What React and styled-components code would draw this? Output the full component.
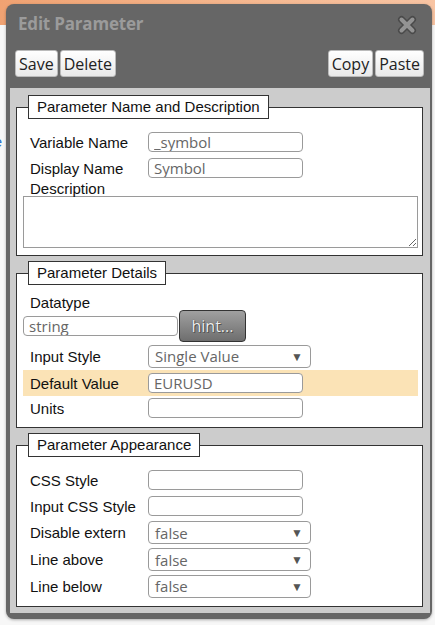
import React from 'react'
import styled, { createGlobalStyle } from 'styled-components';

const GlobalStyle = createGlobalStyle`
  html, body {
    margin: 0;
    padding: 0;
    background: #f5f5f5;
    font-family: "Liberation Sans", Arial, sans-serif;
  }
`;

const Page = styled.div`
  position: relative;
  width: 435px;
  height: 625px;
  overflow: hidden;
  background: #f7f7f7;
`;

const TopBand = styled.div`
  height: 25px;
  background: linear-gradient(to right, #f0a272, #f6b991 60%, #f8c4a3);
`;

const PageLink = styled.a`
  display: block;
  margin: 108px 0 0 -38px;
  font-size: 15px;
  color: #2a6fc9;
  text-decoration: none;
`;

const Dialog = styled.div`
  position: absolute;
  left: 6px;
  top: 4px;
  width: 426px;
  height: 615px;
  box-sizing: border-box;
  background: #666;
  border-radius: 8px;
  display: flex;
  flex-direction: column;
  box-shadow: 0 1px 3px rgba(0, 0, 0, 0.3);
`;

const TitleBar = styled.div`
  height: 38px;
  display: flex;
  align-items: center;
  justify-content: space-between;
  padding: 0 15px 0 12px;
`;

const Title = styled.span`
  font-family: "Open Sans", sans-serif;
  font-weight: 700;
  font-size: 17px;
  color: #9b9b9b;
  letter-spacing: -0.2px;
`;

const Toolbar = styled.div`
  margin-top: 8px;
  height: 27px;
  display: flex;
  justify-content: space-between;
  padding: 0 8px 0 9px;
`;

const ButtonGroup = styled.div`
  display: flex;
  gap: 2px;
`;

const ToolButton = styled.button`
  height: 27px;
  padding: 0 3px;
  border: 1px solid #bbb;
  border-radius: 3px;
  background: linear-gradient(#ffffff, #e9e9e9);
  font-family: "Open Sans", sans-serif;
  font-size: 16px;
  color: #222;
  cursor: pointer;
`;

const Content = styled.div`
  flex: 1;
  margin: 11px 2px 6px 4px;
  background: #cccccc;
  padding-top: 7px;
  display: flex;
  flex-direction: column;
  gap: 5px;
`;

const Fieldset = styled.fieldset`
  margin: 0 7px 0 6px;
  padding: 10px 4px 7px 6px;
  border: 1px solid #333;
  background: #fff;
  min-width: 0;
`;

const Legend = styled.legend`
  margin-left: 5px;
  padding: 0 8px;
  height: 24px;
  box-sizing: border-box;
  line-height: 22px;
  border: 1px solid #333;
  background: #fff;
  font-size: 15px;
  color: #111;
`;

const Row = styled.div`
  display: grid;
  grid-template-columns: 118px 1fr;
  align-items: center;
  height: ${p => p.$h || 26}px;
  padding-left: 7px;
  box-sizing: border-box;
  background: ${p => (p.$highlight ? '#fbe3b6' : 'transparent')};
`;

const Label = styled.span`
  font-size: 15px;
  color: #111;
`;

const LoneLabel = styled.div`
  padding-left: 7px;
  height: ${p => p.$h}px;
  line-height: ${p => p.$h}px;
  font-size: 15px;
  color: #111;
`;

const TextInput = styled.input`
  width: ${p => p.$w || 155}px;
  height: 20px;
  box-sizing: border-box;
  border: 1px solid #9a9a9a;
  border-radius: 4px;
  padding: 0 5px;
  font-family: "Open Sans", sans-serif;
  font-size: 15px;
  color: #666;
  background: #fff;
  outline: none;
`;

const SelectBox = styled.div`
  width: 163px;
  height: 23px;
  box-sizing: border-box;
  border: 1px solid #9a9a9a;
  border-radius: 4px;
  padding: 0 7px 0 6px;
  display: flex;
  align-items: center;
  justify-content: space-between;
  font-family: "Open Sans", sans-serif;
  font-size: 15px;
  color: #666;
  background: #fff;
`;

const Arrow = styled.span`
  font-size: 12px;
  color: #555;
`;

const TextArea = styled.textarea`
  display: block;
  width: 100%;
  height: 52px;
  box-sizing: border-box;
  margin: 0;
  border: 1px solid #9a9a9a;
  background: #fff;
  outline: none;
`;

const DatatypeRow = styled.div`
  display: flex;
  align-items: center;
  height: 32px;
  margin-top: -1px;
  gap: 1px;
`;

const HintButton = styled.button`
  width: 67px;
  height: 32px;
  border: 1px solid #333;
  border-radius: 4px;
  background: linear-gradient(#a0a0a0, #6e6e6e);
  font-family: "Open Sans", sans-serif;
  font-size: 16px;
  color: #eee;
  text-shadow: 0 0 1px #333, 1px 1px 0 #555;
  cursor: pointer;
`;

const CloseIcon = () => (
  <svg width="20" height="20" viewBox="0 0 20 20" style={{ marginTop: 4 }}>
    <g strokeLinecap="round">
      <path d="M4.5 4.5 L15.5 15.5 M15.5 4.5 L4.5 15.5" stroke="#4a4a4a" strokeWidth="7" />
      <path d="M4.5 4.5 L15.5 15.5 M15.5 4.5 L4.5 15.5" stroke="#939393" strokeWidth="4" />
    </g>
  </svg>
);

const Select = ({ value }) => (
  <SelectBox>
    <span>{value}</span>
    <Arrow>▼</Arrow>
  </SelectBox>
);

const Field = ({ label, h, highlight, children }) => (
  <Row $h={h} $highlight={highlight}>
    <Label>{label}</Label>
    <div>{children}</div>
  </Row>
);

const App = () => {
  return (
    <Page>
      <GlobalStyle />
      <TopBand />
      <PageLink href="#">Name</PageLink>
      <Dialog>
        <TitleBar>
          <Title>Edit Parameter</Title>
          <CloseIcon />
        </TitleBar>
        <Toolbar>
          <ButtonGroup>
            <ToolButton>Save</ToolButton>
            <ToolButton>Delete</ToolButton>
          </ButtonGroup>
          <ButtonGroup>
            <ToolButton>Copy</ToolButton>
            <ToolButton>Paste</ToolButton>
          </ButtonGroup>
        </Toolbar>
        <Content>
          <Fieldset>
            <Legend>Parameter Name and Description</Legend>
            <Field label="Variable Name"><TextInput defaultValue="_symbol" /></Field>
            <Field label="Display Name"><TextInput defaultValue="Symbol" /></Field>
            <LoneLabel $h={15}>Description</LoneLabel>
            <TextArea />
          </Fieldset>

          <Fieldset>
            <Legend>Parameter Details</Legend>
            <LoneLabel $h={16}>Datatype</LoneLabel>
            <DatatypeRow>
              <TextInput $w={155} defaultValue="string" />
              <HintButton>hint...</HintButton>
            </DatatypeRow>
            <Field label="Input Style" h={28}><Select value="Single Value" /></Field>
            <Field label="Default Value" highlight><TextInput defaultValue="EURUSD" /></Field>
            <Field label="Units" h={24}><TextInput defaultValue="" /></Field>
          </Fieldset>

          <Fieldset>
            <Legend>Parameter Appearance</Legend>
            <Field label="CSS Style"><TextInput defaultValue="" /></Field>
            <Field label="Input CSS Style"><TextInput defaultValue="" /></Field>
            <Field label="Disable extern" h={27}><Select value="false" /></Field>
            <Field label="Line above" h={27}><Select value="false" /></Field>
            <Field label="Line below"><Select value="false" /></Field>
          </Fieldset>
        </Content>
      </Dialog>
    </Page>
  )
}

export default App
